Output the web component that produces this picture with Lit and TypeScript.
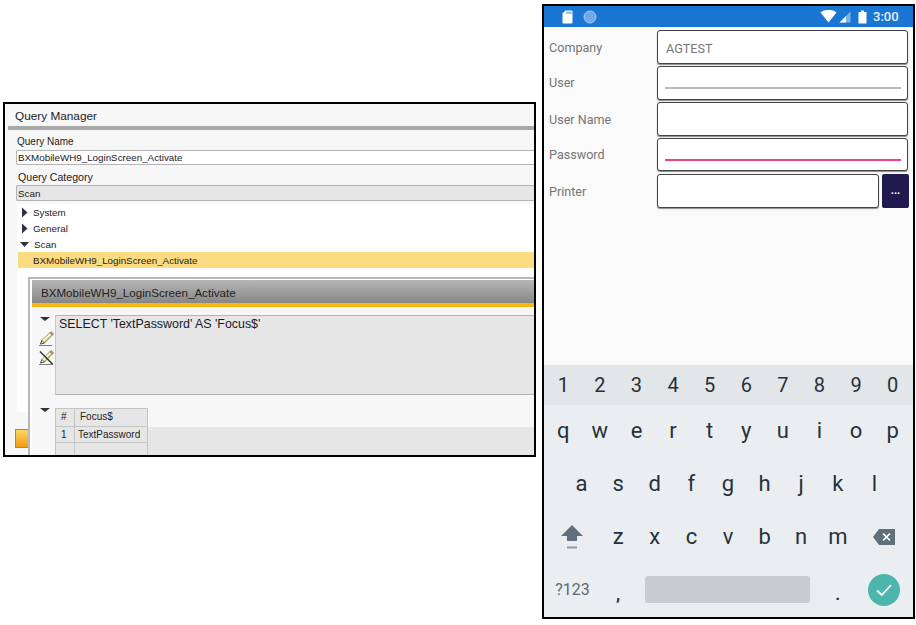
import { LitElement, html, css, svg } from "lit";
import { customElement } from "lit/decorators.js";

const triRight = html`<svg class="arrow" width="7" height="11" viewBox="0 0 7 11"><path d="M1 0.5L6.5 5.5L1 10.5Z" fill="#33333f"/></svg>`;
const triDown = (w = 10, h = 4) => html`<svg class="tri" width="${w}" height="${h}" viewBox="0 0 10 5" preserveAspectRatio="none"><path d="M0 0H10L5 5Z" fill="#2f3038"/></svg>`;

const pencilBody = svg`
  <path d="M1.5 13L3 9.6L11 1.6L13.4 4L5.4 12Z" fill="#f4e35c" stroke="#555" stroke-width="0.8"/>
  <path d="M3.4 9.6L11 2.2L12 3.2L4.4 10.6Z" fill="#fbfbf0"/>
  <path d="M11 1.6L12.2 0.6L14.6 2.8L13.4 4Z" fill="#e88aa0" stroke="#666" stroke-width="0.6"/>
  <path d="M1.5 13L3 9.6L5.4 12Z" fill="#fff" stroke="#333" stroke-width="0.7"/>`;
const pencil = html`<svg width="15" height="15" viewBox="0 0 15 15">${pencilBody}<path d="M0 14.5H13" stroke="#808080" stroke-width="1"/></svg>`;
const pencilX = html`<svg width="15" height="15" viewBox="0 0 15 15">${pencilBody}<path d="M1 1.5L14 14.5" stroke="#333" stroke-width="1.5"/><path d="M0 14.5H13" stroke="#808080" stroke-width="1"/></svg>`;

@customElement("query-panel")
class QueryPanel extends LitElement {
  static styles = css`
    :host { display: block; position: relative; width: 533px; height: 355px; box-sizing: border-box; border: 2px solid #000; background: #f7f7f7; overflow: hidden; font-family: "Liberation Sans", Arial, sans-serif; color: #222; font-size: 10px; }
    .title { height: 22px; line-height: 24px; padding-left: 10px; font-size: 11.8px; }
    .bar { height: 4px; margin-left: 3px; background: #a8a8a8; }
    .label { height: 20px; line-height: 24px; padding-left: 12px; font-size: 10px; }
    .label.cat { padding-left: 13px; font-size: 10.6px; }
    .field { margin-left: 11px; height: 15px; box-sizing: border-box; line-height: 13px; padding-left: 1px; background: #fff; border: 1px solid #b4b4b4; border-right: 0; border-radius: 2px 0 0 2px; font-size: 9.8px; }
    .select { height: 16px; background: #e6e6e6; line-height: 15px; }
    .tree { margin: 3px 0 0 12px; height: 208px; background: #fff; font-size: 9.8px; }
    .row { height: 16px; box-sizing: border-box; padding-top: 1px; display: flex; align-items: center; gap: 5px; line-height: 14px; padding-left: 3px; }
    .row .arrow { margin-left: 1px; }
    .row.sel { background: #fcdc80; padding-left: 15px; margin-left: 1px; }
    .orange { width: 19px; height: 19px; margin: 17px 0 0 10px; box-sizing: border-box; border: 1px solid #8c8c8c; background: linear-gradient(#fcd667, #f09a12); }
    .win { position: absolute; left: 23px; top: 173px; right: 0; bottom: 0; box-sizing: border-box; border-top: 2px solid #b8b8b8; border-left: 2px solid #b8b8b8; background: #fff; padding: 1px 0 0 2px; display: flex; flex-direction: column; }
    .win-head { height: 23px; flex: none; line-height: 25px; padding-left: 9px; font-size: 11.6px; color: #1e1e1e; background: linear-gradient(#b6b6b6, #878787); }
    .win-bar { height: 4px; flex: none; background: #fcb614; }
    .win-body { flex: 1; background: #f7f7f7; padding-top: 8px; }
    .sec { display: flex; }
    .gutter { width: 23px; flex: none; display: flex; flex-direction: column; align-items: flex-start; padding-left: 8px; box-sizing: border-box; }
    .gutter svg { flex: none; }
    .sql { flex: 1; height: 80px; box-sizing: border-box; background: #e6e6e6; border-top: 1px solid #b4b4b4; border-bottom: 1px solid #b4b4b4; border-left: 1px solid #c8c8c8; padding: 1px 0 0 3px; font-size: 12.4px; line-height: 14px; color: #1a1a2a; }
    .g1 .tri { margin: 2px 0 10px; }
    .g1 svg + svg { margin: 0 0 4px -1px; }
    .res { margin-top: 13px; }
    .grid { flex: 1; }
    .hrow, .drow { display: flex; font-size: 10px; }
    .hrow { height: 19px; }
    .drow { height: 16px; background: #e6e6e6; }
    .c1, .c2 { box-sizing: border-box; background: #e6e6e6; border: 1px solid #c4c4c4; border-left: 0; line-height: 16px; }
    .c1 { width: 20px; padding-left: 5px; border-left: 1px solid #c4c4c4; }
    .c2 { width: 73px; padding-left: 4px; }
    .hrow .c2 { padding-left: 5px; }
    .drow .c1, .drow .c2 { border-top: 0; line-height: 15px; }
    .drow .c2 { padding-left: 3px; }
  `;
  render() {
    return html`
      <div class="title">Query Manager</div>
      <div class="bar"></div>
      <div class="label">Query Name</div>
      <div class="field">BXMobileWH9_LoginScreen_Activate</div>
      <div class="label cat">Query Category</div>
      <div class="field select">Scan</div>
      <div class="tree">
        <div class="row">${triRight}<span>System</span></div>
        <div class="row">${triRight}<span>General</span></div>
        <div class="row">${triDown(9, 5)}<span>Scan</span></div>
        <div class="row sel"><span>BXMobileWH9_LoginScreen_Activate</span></div>
      </div>
      <div class="orange"></div>
      <div class="win">
        <div class="win-head">BXMobileWH9_LoginScreen_Activate</div>
        <div class="win-bar"></div>
        <div class="win-body">
          <div class="sec">
            <div class="gutter g1">${triDown()}${pencil}${pencilX}</div>
            <div class="sql">SELECT 'TextPassword' AS 'Focus$'</div>
          </div>
          <div class="sec res">
            <div class="gutter g2">${triDown()}</div>
            <div class="grid">
              <div class="hrow"><div class="c1">#</div><div class="c2">Focus$</div></div>
              <div class="drow"><div class="c1">1</div><div class="c2">TextPassword</div></div>
              <div class="drow"><div class="c1"></div><div class="c2"></div></div>
            </div>
          </div>
        </div>
      </div>
    `;
  }
}

@customElement("phone-panel")
class PhonePanel extends LitElement {
  static styles = css`
    :host { display: flex; flex-direction: column; width: 373px; height: 615px; box-sizing: border-box; border: 2px solid #000; font-family: Roboto, "Liberation Sans", sans-serif; background: #fafafa; overflow: hidden; }
    .status { height: 21px; flex: none; background: #1976d2; display: flex; align-items: center; padding-left: 18px; color: #e6f0fb; }
    .status svg { display: block; flex: none; }
    .sd { margin-right: 10px; }
    .spacer { flex: 1; }
    .clock { width: 46px; padding-left: 6px; box-sizing: border-box; font-size: 13px; font-weight: 500; }
    .form { flex: 1; padding: 3px 4px 0 5px; display: flex; flex-direction: column; }
    .frow { display: flex; align-items: center; height: 34px; margin-bottom: 2px; }
    .frow.r4 { margin-bottom: 3px; height: 33px; }
    .lab { width: 108px; flex: none; font-size: 12.6px; color: #757575; margin-top: 1px; }
    .lab.up { margin-top: -1px; }
    .box { flex: 1; align-self: stretch; box-sizing: border-box; margin-right: 1px; background: #fff; border: 1px solid #444; border-radius: 3px; box-shadow: 0 1px 1px rgba(0,0,0,.45); display: flex; padding: 0 6px 0 7px; font-size: 12.6px; color: #757575; line-height: 35px; }
    .box.printer { margin-right: 0; }
    .val { margin-left: 1px; }
    .line { flex: 1; align-self: flex-end; height: 2px; margin-bottom: 10px; background: #b9b9b9; }
    .box.pw .line { background: #f0407f; margin-bottom: 9px; }
    .more { width: 27px; margin-left: 3px; flex: none; align-self: stretch; border-radius: 2px; background: #211a4f; color: #fff; font-size: 11px; font-weight: 700; text-align: center; line-height: 34px; }
    .kb { flex: none; height: 252px; background: #eaeef1; color: #263238; }
    .nums { height: 40px; background: #e2e6e9; display: grid; grid-template-columns: repeat(10, 1fr); align-items: center; text-align: center; font-size: 20px; padding: 0 2px 0 1px; }
    .keys { display: grid; grid-template-columns: repeat(20, 1fr); grid-auto-rows: 53px; margin-top: -1px; padding: 0 2px 0 1px; align-items: center; text-align: center; font-size: 22px; }
    .k { grid-column: span 2; }
    .s3 { grid-column: span 3; display: flex; justify-content: center; align-items: center; }
    .off { grid-column: 2 / span 2; }
    .gray { font-size: 16px; color: #60696e; }
    .lo { font-size: 17px; font-weight: 700; padding-top: 9px; line-height: 20px; }
    .space { grid-column: span 10; height: 27px; margin: 0 9px 0 9px; border-radius: 3px; background: #c8ccce; }
    .ok { width: 32px; height: 32px; border-radius: 50%; background: #4db6ac; display: flex; align-items: center; justify-content: center; }
  `;
  render() {
    const L1 = [..."qwertyuiop"], L2 = [..."asdfghjkl"], L3 = [..."zxcvbnm"];
    return html`
      <div class="status">
        <svg class="sd" width="11" height="14" viewBox="0 0 11 14"><path d="M3.5 0.5H9.5A1 1 0 0 1 10.5 1.5V12.5A1 1 0 0 1 9.5 13.5H1.5A1 1 0 0 1 0.5 12.5V3.5Z" fill="#fff"/><path d="M5 1.5V4M7 1.5V4M9 1.5V4" stroke="#1976d2" stroke-width="0.9"/></svg>
        <svg width="14" height="14" viewBox="0 0 14 14"><circle cx="7" cy="7" r="6" fill="#74a8e6" stroke="#a8cbf2" stroke-width="1"/></svg>
        <div class="spacer"></div>
        <svg width="17" height="13" viewBox="0 0 17 13"><path d="M0.5 2.5C5 -1 12 -1 16.5 2.5L8.5 12.5Z" fill="#fff"/></svg>
        <svg style="margin-left:1px" width="13" height="12" viewBox="0 0 13 12"><path d="M12.5 0.5V11.5H1.5Z" fill="#7fb0e8"/><path d="M8 5V11.5H1.5Z" fill="#fff"/></svg>
        <svg style="margin-left:7px" width="9" height="14" viewBox="0 0 9 14"><path d="M3 0.5H6V2H8.5V13.5H0.5V2H3Z" fill="#fff"/></svg>
        <div class="clock">3:00</div>
      </div>
      <div class="form">
        <div class="frow"><span class="lab">Company</span><div class="box"><span class="val">AGTEST</span></div></div>
        <div class="frow"><span class="lab up">User</span><div class="box"><div class="line"></div></div></div>
        <div class="frow"><span class="lab">User Name</span><div class="box"></div></div>
        <div class="frow r4"><span class="lab up">Password</span><div class="box pw"><div class="line"></div></div></div>
        <div class="frow"><span class="lab">Printer</span><div class="box printer"></div><div class="more">...</div></div>
      </div>
      <div class="kb">
        <div class="nums">${[..."1234567890"].map((n) => html`<span>${n}</span>`)}</div>
        <div class="keys">
          ${L1.map((c) => html`<span class="k">${c}</span>`)}
          ${L2.map((c, i) => html`<span class="k ${i === 0 ? "off" : ""}">${c}</span>`)}
          <span style="grid-column:span 1"></span>
          <span class="s3"><svg width="22" height="25" viewBox="0 0 22 25"><path d="M11 1L22 12H16V17H6V12H0Z" fill="#60707a"/><path d="M6 23.5H16" stroke="#8f999f" stroke-width="2"/></svg></span>
          ${L3.map((c) => html`<span class="k">${c}</span>`)}
          <span class="s3"><svg width="22" height="16" viewBox="0 0 22 16"><path d="M6 0H22V16H6L0 8Z" fill="#60707a"/><path d="M10 4.5L17 11.5M17 4.5L10 11.5" stroke="#fff" stroke-width="1.7"/></svg></span>
          <span class="s3 gray">?123</span>
          <span class="k lo">,</span>
          <span class="space"></span>
          <span class="k lo">.</span>
          <span class="s3"><span class="ok"><svg width="18" height="14" viewBox="0 0 18 14"><path d="M2 7.5L6.8 12L16 2" fill="none" stroke="#fff" stroke-width="1.8"/></svg></span></span>
        </div>
      </div>
    `;
  }
}

@customElement("app-root")
class AppRoot extends LitElement {
  static styles = css`
    :host { display: flex; align-items: flex-start; width: 916px; height: 625px; box-sizing: border-box; background: #fff; padding: 4px 0 0 3px; }
    query-panel { margin-top: 98px; margin-right: 6px; flex: none; }
    phone-panel { flex: none; }
  `;
  render() {
    return html`<query-panel></query-panel><phone-panel></phone-panel>`;
  }
}
